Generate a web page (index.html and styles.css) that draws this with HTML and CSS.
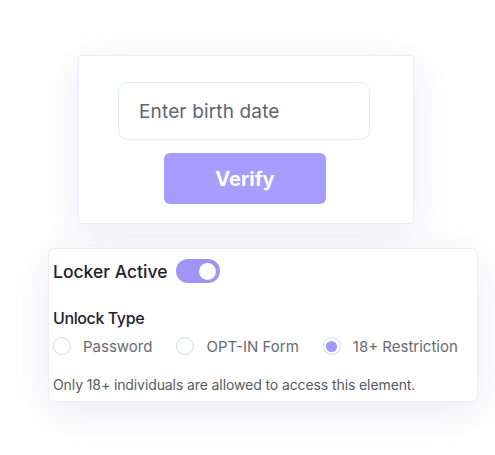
FILE: index.html
```html
<!DOCTYPE html>
<html>
<head>
<meta charset="utf-8">
<link rel="stylesheet" href="styles.css">
</head>
<body>
<div class="page">
  <div class="verify-card">
    <div class="date-input">Enter birth date</div>
    <button class="verify-btn">Verify</button>
  </div>
  <div class="settings-card">
    <div class="locker-row">
      <span class="locker-label">Locker Active</span>
      <span class="toggle"><span class="knob"></span></span>
    </div>
    <div class="unlock-title">Unlock Type</div>
    <div class="radio-row">
      <label class="radio"><span class="circle"></span>Password</label>
      <label class="radio"><span class="circle"></span>OPT-IN Form</label>
      <label class="radio"><span class="circle checked"></span>18+ Restriction</label>
    </div>
    <div class="note">Only 18+ individuals are allowed to access this element.</div>
  </div>
</div>
</body>
</html>
```
FILE: styles.css
```css
* { box-sizing: border-box; }
html, body { margin: 0; padding: 0; background: #ffffff; }
body { font-family: Inter, "Noto Sans", sans-serif; width: 495px; height: 455px; overflow: hidden; }
.page { padding-top: 55px; display: flex; flex-direction: column; }
.verify-card {
  margin-left: 78px; width: 336px; height: 169px;
  background: #fff; border: 1px solid #eeedfb; border-radius: 3px;
  box-shadow: 0 8px 40px rgba(110, 105, 160, 0.13);
  display: flex; flex-direction: column; align-items: flex-start;
  padding: 26px 0 0 39px;
}
.date-input {
  width: 252px; height: 58px; border: 1.5px solid #e2ebf6; border-radius: 9px;
  display: flex; align-items: center; padding-left: 20px;
  font-size: 19px; color: #5f6572; letter-spacing: 0.15px;
}
.verify-btn {
  margin: 13px 0 0 46px; width: 162px; height: 51px; border: none; border-radius: 6px;
  background: #a79dff; color: #fff; font-family: inherit; font-size: 20px; font-weight: 700;
  letter-spacing: 0;
}
.settings-card {
  margin-top: 24px; margin-left: 48px; width: 430px; height: 154px;
  background: #fff; border: 1px solid #eceef8; border-radius: 6px;
  box-shadow: 0 10px 40px rgba(110, 105, 160, 0.13);
  padding: 10px 0 0 4px; display: flex; flex-direction: column;
}
.locker-row { display: flex; align-items: center; gap: 9px; height: 24px; }
.locker-label { font-size: 17.5px; color: #1d2230; font-weight: 500; letter-spacing: 0; white-space: nowrap; }
.toggle {
  width: 44px; height: 24px; border-radius: 12px; background: #a095f6; flex-shrink: 0;
  display: flex; align-items: center; justify-content: flex-end; padding-right: 4px;
}
.knob { width: 17px; height: 17px; border-radius: 50%; background: #fff; }
.unlock-title { margin-top: 25px; font-size: 16px; font-weight: 500; color: #1d2230; letter-spacing: -0.4px; }
.radio-row { display: flex; align-items: center; gap: 24px; margin-top: 7px; height: 22px; white-space: nowrap; }
.radio { display: flex; align-items: center; flex-shrink: 0; font-size: 15px; color: #666b73; letter-spacing: 0; }
.circle {
  width: 18px; height: 18px; border-radius: 50%; border: 1.5px solid #cde0e6; flex-shrink: 0;
  margin-right: 12px; display: inline-flex; align-items: center; justify-content: center;
}
.circle.checked::after { content: ""; width: 11px; height: 11px; border-radius: 50%; background: #a596fb; }
.note { margin-top: 19px; font-size: 14px; color: #555b63; letter-spacing: -0.1px; white-space: nowrap; }
```
